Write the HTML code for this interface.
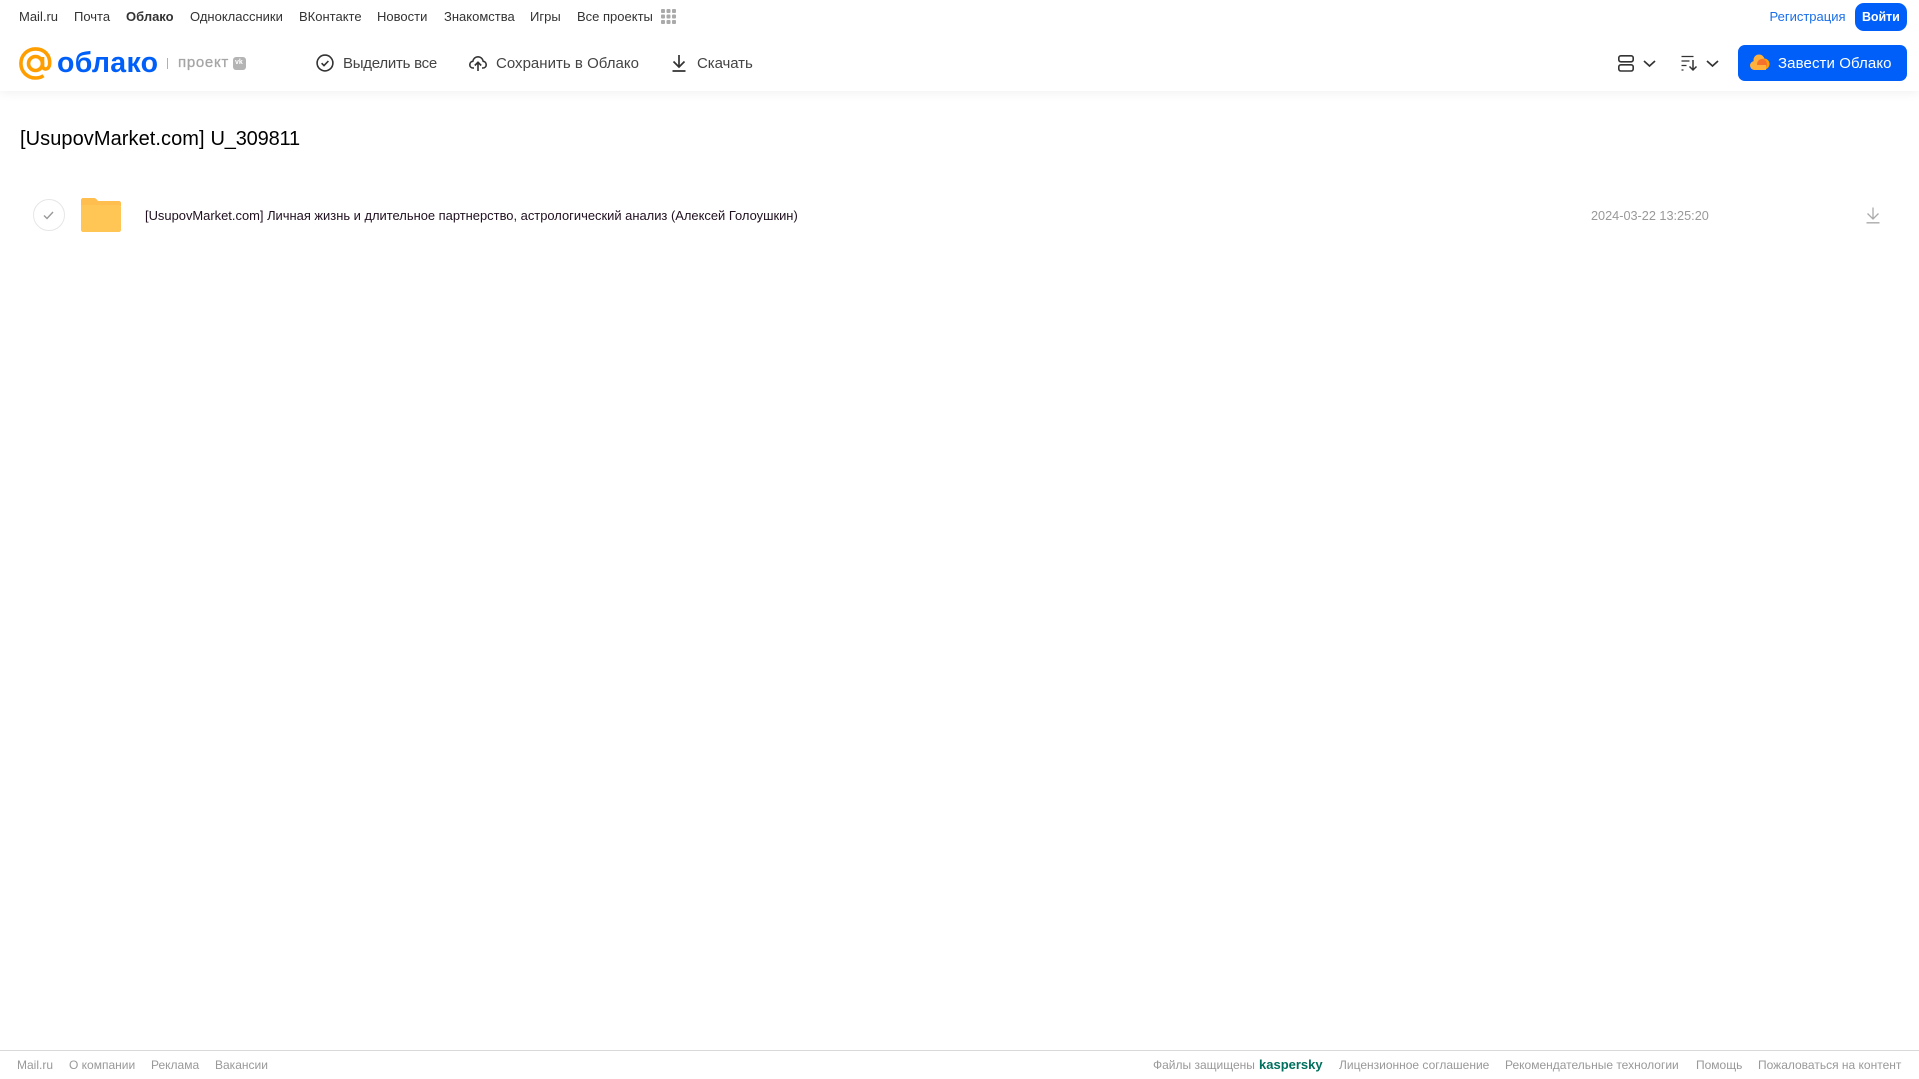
<!DOCTYPE html>
<html lang="ru">
<head>
<meta charset="utf-8">
<title>Облако</title>
<style>
html,body{margin:0;padding:0;background:#fff;}
body{width:1919px;height:1079px;position:relative;overflow:hidden;font-family:"Liberation Sans",sans-serif;color:#2c2d2e;}
.t{position:absolute;white-space:nowrap;line-height:20px;}
.n{top:7px;font-size:13px;color:#333;}
.a{top:54px;font-size:15px;color:#444;}
.f{top:1055px;font-size:12px;color:#999;}
svg{position:absolute;overflow:visible;}
#hdr{position:absolute;left:0;top:0;width:1919px;height:91px;background:#fff;box-shadow:0 2px 10px rgba(0,0,0,.06);}
</style>
</head>
<body>
<div id="hdr"></div>

<span class="t n" style="left:19px">Mail.ru</span>
<span class="t n" style="left:74px">Почта</span>
<span class="t n" style="left:126px;font-weight:bold">Облако</span>
<span class="t n" style="left:190px">Одноклассники</span>
<span class="t n" style="left:299px">ВКонтакте</span>
<span class="t n" style="left:377px">Новости</span>
<span class="t n" style="left:444px">Знакомства</span>
<span class="t n" style="left:530px">Игры</span>
<span class="t n" style="left:577px">Все проекты</span>
<svg style="left:661px;top:9px" width="15" height="15" fill="#aaa"><rect x="0" y="0" width="4" height="4" rx="1"/><rect x="5.5" y="0" width="4" height="4" rx="1"/><rect x="11" y="0" width="4" height="4" rx="1"/><rect x="0" y="5.5" width="4" height="4" rx="1"/><rect x="5.5" y="5.5" width="4" height="4" rx="1"/><rect x="11" y="5.5" width="4" height="4" rx="1"/><rect x="0" y="11" width="4" height="4" rx="1"/><rect x="5.5" y="11" width="4" height="4" rx="1"/><rect x="11" y="11" width="4" height="4" rx="1"/></svg>

<span class="t n" style="left:1769.5px;color:#1a6fe8">Регистрация</span>
<div style="position:absolute;left:1855px;top:3px;width:52px;height:28px;border-radius:9px;background:#005ff9"></div>
<span class="t n" style="left:1862px;color:#fff;font-weight:bold;font-size:12.5px;letter-spacing:-.1px">Войти</span>

<!-- logo -->
<svg style="left:19px;top:47px" width="33" height="33" viewBox="0 0 33 33" fill="none" stroke="#ff9e00" stroke-width="3.6">
<circle cx="16.5" cy="16.5" r="7"/>
<path d="M23.5 10v8.5c0 5 6.8 4.8 7.2-1.6C31.3 8 25 1.9 16.5 1.9 8.3 1.9 1.9 8.4 1.9 16.5S8.3 31 16.5 31c3.3 0 6-.9 8-2.3"/>
</svg>
<span class="t" style="left:57px;top:44.5px;font-size:28.5px;line-height:36px;color:#005ff9;font-weight:bold;letter-spacing:.3px">облако</span>
<div style="position:absolute;left:167px;top:58px;width:1px;height:11px;background:#b0b0b0"></div>
<span class="t" style="left:178px;top:53px;font-size:15px;color:#a5a5a5;letter-spacing:.7px;-webkit-text-stroke:.3px #a5a5a5">проект</span>
<div style="position:absolute;left:233px;top:57px;width:13px;height:13px;border-radius:3px;background:#b4b4b4"></div>
<span class="t" style="left:235px;top:53px;font-size:7px;font-weight:bold;color:#fff">vk</span>

<!-- toolbar -->
<svg style="left:316px;top:54px" width="18" height="18" viewBox="0 0 18 18" fill="none" stroke="#333" stroke-width="1.6"><circle cx="9" cy="9" r="7.9"/><path d="M5.6 9.2l2.4 2.4 4.4-4.6"/></svg>
<span class="t a" style="left:343px;letter-spacing:-.25px">Выделить все</span>
<svg style="left:469px;top:54px" width="18" height="18" viewBox="0 0 18 18" fill="none" stroke="#333" stroke-width="1.6"><path d="M5 14H4.2C2 14 .8 12.4.8 10.7c0-1.8 1.3-3.2 3-3.4C4.4 4.6 6.500 2.800 9 2.800s4.600 1.800 5.200 4.500c1.700.2 3 1.600 3 3.400 0 1.700-1.200 3.300-3.400 3.300H13"/><path d="M9 17V8.500M5.800 11.500L9 8.300l3.200 3.200"/></svg>
<span class="t a" style="left:496px;letter-spacing:.02px">Сохранить в Облако</span>
<svg style="left:671px;top:54px" width="16" height="18" viewBox="0 0 16 18" fill="none" stroke="#333" stroke-width="1.7"><path d="M8 1v11.500M2.500 7.500L8 13l5.500-5.500M1.500 17h13"/></svg>
<span class="t a" style="left:697px;letter-spacing:-.08px">Скачать</span>

<svg style="left:1618px;top:55px" width="16" height="17" viewBox="0 0 16 17" fill="none" stroke="#333" stroke-width="1.6"><rect x=".8" y=".8" width="14.4" height="6" rx="2"/><rect x=".8" y="9.8" width="14.4" height="6.2" rx="2"/></svg>
<svg style="left:1643px;top:60px" width="13" height="7" viewBox="0 0 13 7" fill="none" stroke="#333" stroke-width="1.7"><path d="M1 1l5.500 5L12 1"/></svg>
<svg style="left:1681px;top:55px" width="17" height="16" viewBox="0 0 17 16" fill="none" stroke="#333" stroke-width="1.3"><path d="M.5 1.500h12M.5 6h8M.5 10.500h5M.5 15h2"/><path d="M12 5v10M8.500 11.500L12 15l3.500-3.500" stroke-width="1.5"/></svg>
<svg style="left:1706px;top:60px" width="13" height="7" viewBox="0 0 13 7" fill="none" stroke="#333" stroke-width="1.7"><path d="M1 1l5.500 5L12 1"/></svg>

<div style="position:absolute;left:1738px;top:45px;width:169px;height:36px;border-radius:7px;background:#005ff9"></div>
<svg style="left:1750px;top:54px" width="20" height="17" viewBox="0 0 20 17"><circle cx="4.500" cy="11.500" r="4.500" fill="#ffb13d"/><circle cx="9" cy="6" r="5.500" fill="#ffb13d"/><circle cx="14" cy="10" r="5.500" fill="#ff9e00"/><circle cx="12" cy="10" r="5" fill="#f5712c"/><rect x="4" y="11" width="12" height="5" fill="#ffb13d"/></svg>
<span class="t a" style="left:1778px;color:#fff;letter-spacing:.1px">Завести Облако</span>

<!-- title -->
<span class="t" style="left:20px;top:126px;font-size:20px;line-height:26px;color:#000;letter-spacing:.07px">[UsupovMarket.com]</span>
<span class="t" style="left:210.500px;top:126px;font-size:20px;line-height:26px;color:#000;letter-spacing:-.17px">U_309811</span>

<!-- row -->
<div style="position:absolute;left:33px;top:199px;width:30px;height:30px;border:1px solid #e6e6e6;border-radius:50%"></div>
<svg style="left:43px;top:211px" width="11" height="9" viewBox="0 0 11 9" fill="none" stroke="#999" stroke-width="1.4"><path d="M1 4.500l3 3 6-6.500"/></svg>
<svg style="left:81px;top:198px" width="40" height="34" viewBox="0 0 40 34"><path d="M2 0h11c1.500 0 2.500 1 3.500 2.500L17.500 3H38c1 0 2 1 2 2v3H0V2c0-1 1-2 2-2z" fill="#ffbe4d"/><path d="M0 7h38c1 0 2 1 2 2v23c0 1-1 2-2 2H2c-1 0-2-1-2-2z" fill="#ffc555"/></svg>
<span class="t" style="left:145px;top:206px;font-size:12.93px;color:#201020">[UsupovMarket.com] Личная жизнь и длительное партнерство, астрологический анализ (Алексей Голоушкин)</span>
<span class="t" style="left:1591px;top:206px;font-size:12.7px;color:#999">2024-03-22 13:25:20</span>
<svg style="left:1866px;top:207px" width="14" height="17" viewBox="0 0 14 17" fill="none" stroke="#aaa" stroke-width="1.3"><path d="M7 .5V11.500M1.500 6.500L7 12l5.500-5.500M.5 15.800h13"/></svg>

<!-- footer -->
<div style="position:absolute;left:0;top:1050px;width:1919px;height:1px;background:#d9d9d9"></div>
<span class="t f" style="left:17px">Mail.ru</span>
<span class="t f" style="left:69px">О компании</span>
<span class="t f" style="left:151px">Реклама</span>
<span class="t f" style="left:215px">Вакансии</span>
<span class="t f" style="left:1153px">Файлы защищены</span>
<span class="t f" style="left:1259px;color:#00705e;font-weight:bold;font-size:13px">kaspersky</span>
<span class="t f" style="left:1339px">Лицензионное соглашение</span>
<span class="t f" style="left:1505px">Рекомендательные технологии</span>
<span class="t f" style="left:1696px">Помощь</span>
<span class="t f" style="left:1758px">Пожаловаться на контент</span>
</body>
</html>
